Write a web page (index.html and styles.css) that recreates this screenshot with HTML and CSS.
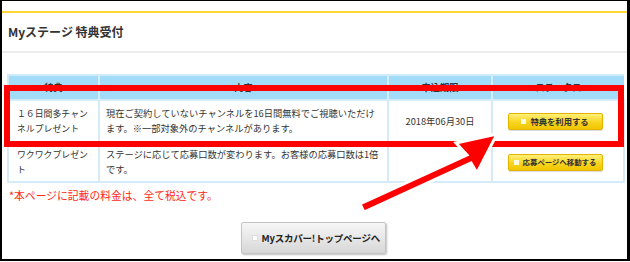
FILE: index.html
```html
<!DOCTYPE html>
<html lang="ja">
<head>
<meta charset="utf-8">
<link rel="stylesheet" href="styles.css">
</head>
<body>
<div class="frame">
  <div class="topline"></div>
  <h1 class="title">Myステージ 特典受付</h1>
  <div class="content">
    <table class="benefits">
      <colgroup>
        <col class="c1"><col class="c2"><col class="c3"><col class="c4">
      </colgroup>
      <thead>
        <tr><th>特典</th><th>内容</th><th>申込期限</th><th>ステータス</th></tr>
      </thead>
      <tbody>
        <tr class="r1">
          <td class="name">１６日間多チャン<br>ネルプレゼント</td>
          <td>現在ご契約していないチャンネルを16日間無料でご視聴いただけます。※一部対象外のチャンネルがあります。</td>
          <td class="date">2018年06月30日</td>
          <td class="status"><span class="ybtn"><i class="sq"></i>特典を利用する</span></td>
        </tr>
        <tr class="r2">
          <td class="name">ワクワクプレゼン<br>ト</td>
          <td>ステージに応じて応募口数が変わります。お客様の応募口数は1倍です。</td>
          <td class="date"></td>
          <td class="status"><span class="ybtn small"><i class="sq"></i>応募ページへ移動する</span></td>
        </tr>
      </tbody>
    </table>
    <p class="note">*本ページに記載の料金は、全て税込です。</p>
    <div class="btnrow"><span class="gbtn"><i class="sq"></i>Myスカパー!トップページへ</span></div>
  </div>
  <div class="highlight"></div>
  <svg class="arrow" width="630" height="262" viewBox="0 0 630 262">
    <polygon points="497,134 456,143 467,155 360,204 364,212 471,163 477,173" fill="#ff0000" stroke="#ffffff" stroke-width="3" stroke-linejoin="miter"/>
  </svg>
</div>
</body>
</html>
```
FILE: styles.css
```css
* { box-sizing: border-box; }
html, body { margin: 0; padding: 0; background: #fff; }
body {
  font-family: "Noto Sans CJK JP", "Noto Sans", sans-serif;
  color: #333;
  width: 630px;
  height: 262px;
  overflow: hidden;
}
.frame {
  position: relative;
  width: 630px;
  height: 261px;
  border-top: 1px solid #000;
  border-left: 2px solid #000;
  border-right: 3px solid #000;
  border-bottom: 2px solid #000;
  background: #fff;
}
.topline {
  margin-top: 10px;
  height: 2px;
  background: #fdd535;
}
.title {
  margin: 0;
  height: 40px;
  padding: 0 0 0 6px;
  font-size: 12px;
  font-weight: bold;
  line-height: 38px;
  color: #333;
  border-bottom: 2px solid #ececec;
}
.content {
  padding: 21px 0 0 5px;
}
.benefits {
  border-collapse: collapse;
  width: 616px;
  table-layout: fixed;
  font-size: 9.25px;
  line-height: 15px;
}
.c1 { width: 91px; }
.c2 { width: 289px; }
.c3 { width: 104px; }
.c4 { width: 132px; }
.benefits th {
  background: #a3dcf8;
  height: 25px;
  font-weight: bold;
  color: #333;
  border-left: 2px solid #d4eefb;
  border-top: 2px solid #cfeafa;
  padding: 0;
}
.benefits th:first-child { border-left: 2px solid #cfeafa; }
.benefits td {
  border: 2px solid #d5ecf8;
  padding: 0 6px;
  vertical-align: middle;
}
.benefits td.name {
  padding: 0 0 0 8px;
  font-size: 8.9px;
  font-feature-settings: "fwid" 1;
  letter-spacing: 0;
  white-space: nowrap;
}
.r1 td { height: 42px; }
.r2 td { height: 40px; }
.date { text-align: center; }
.status { text-align: center; }
.ybtn {
  display: inline-flex;
  align-items: center;
  justify-content: center;
  width: 95px;
  height: 17px;
  margin-right: 6px;
  font-size: 8.3px;
  font-weight: bold;
  color: #333;
  background: linear-gradient(#fff07a, #f8d420 55%, #f2c600);
  border: 1px solid #e2b400;
  border-radius: 2px;
  box-shadow: 0 1px 1px rgba(0,0,0,0.15);
  line-height: 1;
  vertical-align: middle;
}
.ybtn.small { font-size: 7.4px; }
.ybtn .sq {
  display: inline-block;
  width: 5px;
  height: 5px;
  background: #fffbe0;
  margin-right: 4px;
}
.note {
  margin: 5px 0 0 2px;
  font-size: 10.8px;
  line-height: 14px;
  color: #ff2a1a;
}
.btnrow {
  display: flex;
  justify-content: center;
  margin-top: 20px;
  padding-right: 8px;
}
.gbtn {
  display: inline-flex;
  align-items: center;
  width: 145px;
  height: 32px;
  padding-left: 10px;
  font-size: 9.5px;
  font-weight: bold;
  color: #222;
  background: linear-gradient(#f6f6f6, #e4e4e4 60%, #d6d6d6);
  border: 1px solid #c4c4c4;
  border-radius: 2px;
  box-shadow: 1px 1px 2px rgba(0,0,0,0.25);
  letter-spacing: -0.2px;
}
.gbtn .sq {
  display: inline-block;
  width: 6px;
  height: 6px;
  background: #fff;
  border: 1px solid #ddd;
  margin-right: 4px;
}
.highlight {
  position: absolute;
  left: 2px;
  top: 84px;
  width: 620px;
  height: 62px;
  border: 6px solid #ff0000;
}
.arrow {
  position: absolute;
  left: -2px;
  top: -1px;
}
```
